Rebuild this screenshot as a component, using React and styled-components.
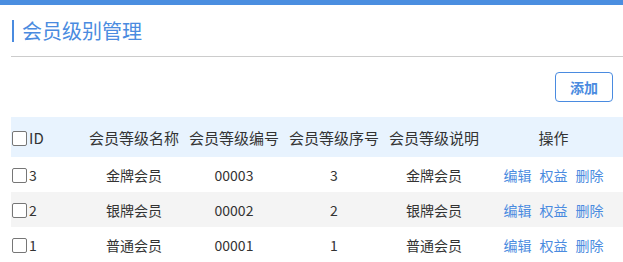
import React from "react";
import styled, { createGlobalStyle } from "styled-components";

const levels = [
  { id: 3, name: "金牌会员", code: "00003", order: 3, desc: "金牌会员" },
  { id: 2, name: "银牌会员", code: "00002", order: 2, desc: "银牌会员" },
  { id: 1, name: "普通会员", code: "00001", order: 1, desc: "普通会员" },
];

function App() {
  return (
    <>
      <GlobalStyle />
      <TopBar />
      <Page>
        <Title>会员级别管理</Title>
        <Toolbar>
          <AddButton>添加</AddButton>
        </Toolbar>
        <Table>
          <colgroup>
            <col style={{ width: 73 }} />
            <col style={{ width: 100 }} />
            <col style={{ width: 100 }} />
            <col style={{ width: 100 }} />
            <col style={{ width: 100 }} />
            <col />
          </colgroup>
          <thead>
            <tr>
              <Th left>
                <Check type="checkbox" />ID
              </Th>
              <Th>会员等级名称</Th>
              <Th>会员等级编号</Th>
              <Th>会员等级序号</Th>
              <Th>会员等级说明</Th>
              <Th>操作</Th>
            </tr>
          </thead>
          <tbody>
            {levels.map((l, i) => (
              <Row key={l.id} striped={i % 2 === 1}>
                <Td left>
                  <Check type="checkbox" />{l.id}
                </Td>
                <Td>{l.name}</Td>
                <Td>{l.code}</Td>
                <Td>{l.order}</Td>
                <Td>{l.desc}</Td>
                <Td>
                  <Actions>
                    <LinkText>编辑</LinkText>
                    <LinkText>权益</LinkText>
                    <LinkText>删除</LinkText>
                  </Actions>
                </Td>
              </Row>
            ))}
          </tbody>
        </Table>
      </Page>
    </>
  );
}

export default App;

const GlobalStyle = createGlobalStyle`
  body {
    margin: 0;
    background: #fff;
    font-family: "Microsoft YaHei", "Noto Sans CJK SC", sans-serif;
    color: #333;
  }
`;

const TopBar = styled.div`
  height: 5px;
  background-color: #4a8ee0;
`;

const Page = styled.div`
  padding-left: 11px;
`;

const Title = styled.h2`
  margin: 15px 0 0 0;
  height: 37px;
  border-bottom: 1px solid #cccccc;
  box-sizing: border-box;
  font-size: 20px;
  font-weight: 400;
  line-height: 22px;
  color: #4a8be0;
  &::before{
    content: "";
    display: inline-block;
    width: 2px;
    height: 22px;
    background: #4a8be0;
    margin: 0 8px 0 1px;
    vertical-align: top;
  }
`;

const Toolbar = styled.div`
  display: flex;
  justify-content: flex-end;
  padding: 15px 10px 15px 0;
`;

const AddButton = styled.button`
  width: 58px;
  height: 30px;
  border: 1px solid #4a8be0;
  border-radius: 4px;
  background: #fff;
  color: #4a8be0;
  font-family: "Microsoft YaHei", "Noto Sans CJK SC", sans-serif;
  font-size: 14px;
  font-weight: 700;
  padding: 0;
  cursor: pointer;
`;

const Table = styled.table`
  width: 612px;
  border-collapse: collapse;
  table-layout: fixed;
`;

const Th = styled.th`
  height: 40px;
  padding: 0;
  background: #e8f3fe;
  font-size: 15px;
  font-weight: 400;
  color: #333;
  text-align: ${({ left }) => (left ? "left" : "center")};
  white-space: nowrap;
`;

const Row = styled.tr`
  background: ${({ striped }) => (striped ? "#f4f4f4" : "#fff")};
`;

const Td = styled.td`
  height: 35px;
  padding: 0;
  font-size: 14px;
  color: #333;
  text-align: ${({ left }) => (left ? "left" : "center")};
  white-space: nowrap;
`;

const Check = styled.input`
  appearance: none;
  width: 15px;
  height: 15px;
  margin: 0 2px 0 1px;
  border: 1px solid #767676;
  border-radius: 2px;
  background: #fff;
  vertical-align: -2px;
  box-sizing: border-box;
`;

const Actions = styled.div`
  display: flex;
  justify-content: center;
  gap: 8px;
`;

const LinkText = styled.a`
  color: #4a8be0;
  font-size: 14px;
  cursor: pointer;
`;
